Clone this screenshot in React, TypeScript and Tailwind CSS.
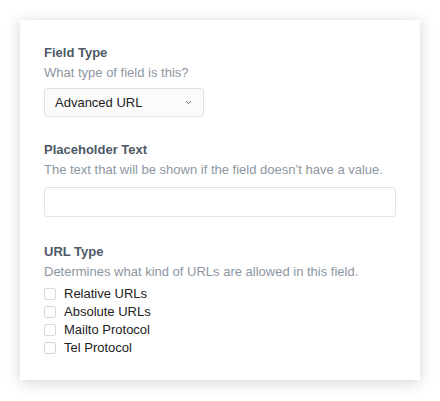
import React from "react";

const Label = ({ children }: { children: React.ReactNode }) => (
  <div className="text-[13px] leading-[18px] font-bold text-[#4d5966]">{children}</div>
);
const Desc = ({ children }: { children: React.ReactNode }) => (
  <div className="mt-px text-[13px] leading-[20px] text-[#8c96a2]">{children}</div>
);

export default function App() {
  const opts = ["Relative URLs", "Absolute URLs", "Mailto Protocol", "Tel Protocol"];
  return (
    <div className="w-[440px] h-[401px] bg-white p-5 font-['Liberation_Sans',Arial,sans-serif]">
      <div className="w-[400px] h-[360px] bg-white px-6 pt-6 shadow-[0_2px_14px_rgba(0,0,0,0.18)]">
        <Label>Field Type</Label>
        <Desc>What type of field is this?</Desc>
        <div className="mt-[5px] w-[160px] h-[29px] rounded-[3px] border border-[#dfe2e6] bg-[#fbfbfb] flex items-center justify-between pl-[10px] pr-[10px] text-[13px] text-[#222]">
          <span>Advanced URL</span>
          <svg width="7" height="5" viewBox="0 0 7 5" className="mr-[1px]">
            <path d="M1 1.2 L3.5 3.6 L6 1.2" fill="none" stroke="#666" strokeWidth="1" />
          </svg>
        </div>

        <div className="mt-[24px]">
          <Label>Placeholder Text</Label>
          <Desc>The text that will be shown if the field doesn’t have a value.</Desc>
          <div className="mt-[7px] w-[352px] h-[30px] rounded-[3px] border border-[#dfe2e6] bg-white" />
        </div>

        <div className="mt-[26px]">
          <Label>URL Type</Label>
          <Desc>Determines what kind of URLs are allowed in this field.</Desc>
          <div className="mt-[3px] flex flex-col">
            {opts.map((o) => (
              <div key={o} className="flex items-center h-[18px]">
                <span className="w-[12px] h-[12px] rounded-[2px] border border-[#d5d9de] bg-white" />
                <span className="ml-[8px] text-[13px] text-[#222]">{o}</span>
              </div>
            ))}
          </div>
        </div>
      </div>
    </div>
  );
}
